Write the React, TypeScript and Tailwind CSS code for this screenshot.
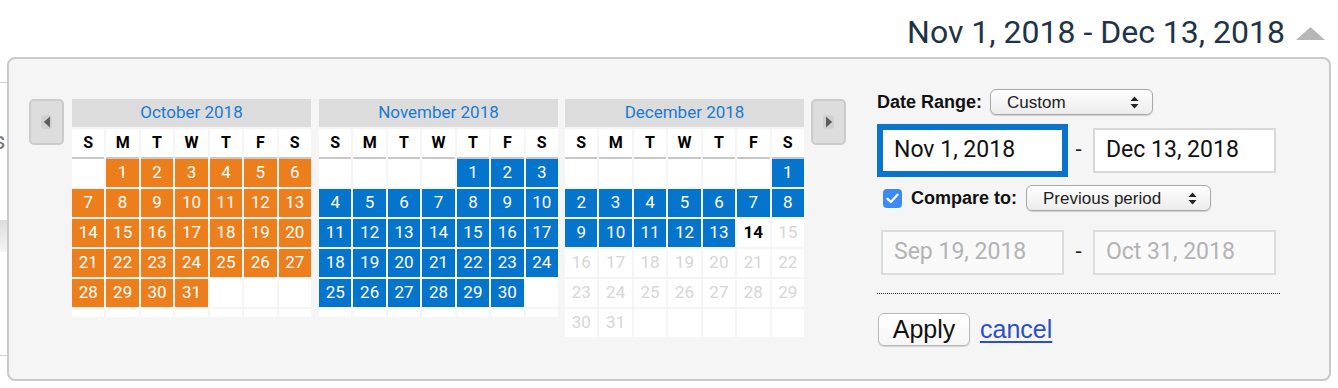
import React from 'react'

type Kind = 'orange' | 'blue' | 'today' | 'off' | 'empty'
type Cell = { d?: number; kind: Kind }

type Month = {
  title: string
  start: number
  days: number
  kindFor: (d: number) => Kind
}

const months: Month[] = [
  { title: 'October 2018', start: 1, days: 31, kindFor: () => 'orange' },
  { title: 'November 2018', start: 4, days: 30, kindFor: () => 'blue' },
  {
    title: 'December 2018',
    start: 6,
    days: 31,
    kindFor: (d) => (d < 14 ? 'blue' : d === 14 ? 'today' : 'off'),
  },
]

const weekdays = ['S', 'M', 'T', 'W', 'T', 'F', 'S']

function buildRows(m: Month): Cell[][] {
  const cells: Cell[] = []
  for (let i = 0; i < m.start; i++) cells.push({ kind: 'empty' })
  for (let d = 1; d <= m.days; d++) cells.push({ d, kind: m.kindFor(d) })
  while (cells.length < 42) cells.push({ kind: 'empty' })
  const rows: Cell[][] = []
  for (let r = 0; r < 6; r++) rows.push(cells.slice(r * 7, r * 7 + 7))
  return rows
}

const cellStyle: Record<Kind, string> = {
  orange: 'bg-[#ec7e1b] text-white',
  blue: 'bg-[#0574cc] text-white',
  today: 'bg-white text-black font-bold',
  off: 'bg-white text-[#d6d6d6]',
  empty: 'bg-white',
}

function MonthTable({ month }: { month: Month }) {
  const rows = buildRows(month)
  return (
    <div className="w-[239px] shrink-0">
      <div className="flex h-[28px] items-center justify-center bg-[#dcdcdc] text-[17px] text-[#1a7ad0]">
        {month.title}
      </div>
      <div className="mt-[2px] grid grid-cols-7 gap-x-[2px]">
        {weekdays.map((w, i) => (
          <div
            key={i}
            className="flex h-[30px] items-center justify-center border-b-2 border-[#c8c8c8] bg-white pb-[1px] text-[16px] font-bold text-black"
          >
            {w}
          </div>
        ))}
      </div>
      <div className="flex flex-col gap-y-[2px]">
        {rows.map((row, r) => {
          const blank = row.every((c) => c.kind === 'empty')
          return (
            <div key={r} className="grid grid-cols-7 gap-x-[2px]">
              {row.map((c, i) => (
                <div
                  key={i}
                  className={`flex items-center justify-center text-[17px] ${blank ? 'h-[8px]' : 'h-[28px]'} ${cellStyle[c.kind]}`}
                >
                  {c.d}
                </div>
              ))}
            </div>
          )
        })}
      </div>
    </div>
  )
}

function NavButton({ dir }: { dir: 'left' | 'right' }) {
  return (
    <div className="flex h-[46px] w-[35px] shrink-0 items-center justify-center rounded-[5px] border-2 border-[#cbcbcb] bg-[#dddddd]">
      <div className="flex h-[14px] w-[11px] items-center justify-center rounded-[3px] bg-[#d0d0d0]">
        <svg width="8" height="12" viewBox="0 0 8 12">
          {dir === 'left' ? <path d="M7 0.5 L0.8 6 L7 11.5 Z" fill="#5d5d5d" /> : <path d="M1 0.5 L7.2 6 L1 11.5 Z" fill="#5d5d5d" />}
        </svg>
      </div>
    </div>
  )
}

function SelectBox({ label, width }: { label: string; width: string }) {
  return (
    <div
      className={`flex h-[26px] items-center justify-between rounded-[6px] border border-[#a8a8a8] bg-gradient-to-b from-white to-[#ececec] pl-[16px] pr-[13px] text-[17px] text-[#222] shadow-[0_1px_1px_rgba(0,0,0,0.15)] ${width}`}
    >
      <span className="leading-none">{label}</span>
      <svg width="9" height="13" viewBox="0 0 9 13">
        <path d="M4.5 0.5 L8.5 5 L0.5 5 Z" fill="#222" />
        <path d="M4.5 12.5 L8.5 8 L0.5 8 Z" fill="#222" />
      </svg>
    </div>
  )
}

export default function App() {
  return (
    <div className="relative h-[388px] w-[1338px] overflow-hidden bg-white font-[Roboto,'Liberation_Sans',Arial,sans-serif]">
      {/* page behind the picker */}
      <div className="flex h-[57px] items-start justify-end pr-[13px] pt-[16px]">
        <span className="text-[32px] leading-none text-[#1e3348]">Nov 1, 2018 - Dec 13, 2018</span>
        <svg className="ml-[11px] mt-[11px]" width="29" height="13" viewBox="0 0 29 13">
          <path d="M14.5 0 L29 13 L0 13 Z" fill="#b7b7b7" />
        </svg>
      </div>
      <div className="mt-[25px] flex">
        <div className="w-[10px] border-t border-[#d2d2d2]" />
      </div>
      <div className="mt-[46px] text-[24px] leading-none text-[#777]">
        <span className="-ml-[7px]">s</span>
      </div>
      <div className="mt-[67px] flex">
        <div className="h-[32px] w-[10px] bg-gradient-to-b from-[#dedede] to-[#f4f4f4]" />
      </div>
      <div className="mt-[103px] flex">
        <div className="w-[10px] border-t border-[#d2d2d2]" />
      </div>
      <div className="mt-[19px] flex h-[6px]">
        <div className="w-[426px]" />
        <div className="w-[450px] border-l-2 border-[#dcdcdc]" />
        <div className="border-l-2 border-[#dcdcdc]" />
      </div>

      {/* date picker popup */}
      <div className="absolute left-[7px] top-[57px] flex h-[324px] w-[1324px] items-start rounded-[8px] border-2 border-[#c9c9c9] bg-[#f5f5f5] pl-[20px] pt-[30px]">
        <div className="mt-[10px] flex items-start">
          <NavButton dir="left" />
          <div className="ml-[8px]">
            <MonthTable month={months[0]} />
          </div>
          <div className="ml-[8px]">
            <MonthTable month={months[1]} />
          </div>
          <div className="ml-[7px]">
            <MonthTable month={months[2]} />
          </div>
          <div className="ml-[7px]">
            <NavButton dir="right" />
          </div>
        </div>

        <div className="ml-[31px] flex w-[404px] flex-col font-['Liberation_Sans',Arial,sans-serif]">
          <div className="flex h-[26px] items-center">
            <span className="text-[18px] font-bold leading-none text-[#111]">Date Range:</span>
            <SelectBox label="Custom" width="ml-[8px] w-[163px]" />
          </div>

          <div className="mt-[13px] flex h-[45px] items-center font-[Roboto,sans-serif]">
            <div className="ml-[4px] flex h-[45px] w-[183px] items-center border-2 border-[#0a74cd] bg-white pl-[11px] text-[23px] text-[#111] outline-4 outline-[#0a74cd]">
              Nov 1, 2018
            </div>
            <div className="w-[29px] pb-[2px] text-center text-[22px] text-[#222]">-</div>
            <div className="flex h-[45px] w-[183px] items-center border-2 border-[#d8d8d8] bg-white pl-[11px] text-[23px] text-[#111]">
              Dec 13, 2018
            </div>
          </div>

          <div className="mt-[12px] flex h-[26px] items-center">
            <div className="ml-[6px] flex h-[19px] w-[19px] items-center justify-center rounded-[4px] bg-[#3a8bf6]">
              <svg width="13" height="11" viewBox="0 0 13 11">
                <path d="M1.5 5.8 L4.8 9 L11.5 1.8" fill="none" stroke="white" strokeWidth="2.3" strokeLinecap="round" strokeLinejoin="round" />
              </svg>
            </div>
            <span className="ml-[9px] text-[18px] font-bold leading-none text-[#111]">Compare to:</span>
            <SelectBox label="Previous period" width="ml-[9px] w-[185px]" />
          </div>

          <div className="mt-[19px] flex h-[45px] items-center font-[Roboto,sans-serif]">
            <div className="ml-[4px] flex h-[45px] w-[183px] items-center border-2 border-[#dcdcdc] bg-[#f9f9f9] pl-[11px] text-[23px] text-[#b3b3b3]">
              Sep 19, 2018
            </div>
            <div className="w-[29px] pb-[2px] text-center text-[22px] text-[#222]">-</div>
            <div className="flex h-[45px] w-[183px] items-center border-2 border-[#dcdcdc] bg-[#f9f9f9] pl-[11px] text-[23px] text-[#b3b3b3]">
              Oct 31, 2018
            </div>
          </div>

          <div className="mt-[18px] w-[403px] border-t-[1.5px] border-dotted border-[#333]" />

          <div className="mt-[19px] flex items-center">
            <div className="ml-[1px] flex h-[33px] w-[92px] items-center justify-center rounded-[6px] border border-[#b8b8b8] bg-gradient-to-b from-white to-[#f6f6f6] text-[25px] leading-none text-[#111] shadow-[0_1px_1px_rgba(0,0,0,0.15)]">
              Apply
            </div>
            <span className="ml-[10px] text-[25px] leading-none text-[#2c4ecb] underline decoration-[2px] underline-offset-[3px]">cancel</span>
          </div>
        </div>
      </div>
    </div>
  )
}
